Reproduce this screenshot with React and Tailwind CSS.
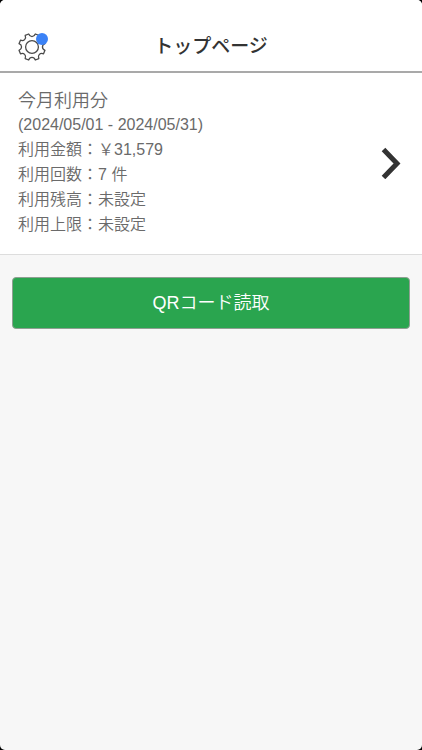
import React from "react";

const usage = {
  title: "今月利用分",
  period: "(2024/05/01 - 2024/05/31)",
  rows: [
    { label: "利用金額", value: "￥31,579" },
    { label: "利用回数", value: "7 件" },
    { label: "利用残高", value: "未設定" },
    { label: "利用上限", value: "未設定" },
  ],
};

// Outline of the gear: n flat teeth with round notches between them
function gearPath(n, inner, outer) {
  const step = (Math.PI * 2) / n;
  const at = (r, a) => `${(16 + r * Math.cos(a)).toFixed(2)} ${(16 + r * Math.sin(a)).toFixed(2)}`;
  let d = "";
  for (let i = 0; i < n; i++) {
    const a = i * step - Math.PI / 2 + step / 2;
    d += `${i === 0 ? "M" : "L"}${at(outer, a - step * 0.18)}`;
    d += `L${at(outer, a + step * 0.18)}`;
    d += `C${at(inner, a + step * 0.24)} ${at(inner, a + step * 0.76)} ${at(outer, a + step * 0.82)}`;
  }
  return d + "Z";
}

function GearIcon() {
  return (
    <svg viewBox="0 0 32 32" className="w-8 h-8" fill="none" stroke="#4a4a4a" strokeWidth="1.3" strokeLinejoin="round" aria-hidden="true">
      <path d={gearPath(8, 9.8, 13.4)} />
      <circle cx="16" cy="16" r="6.4" />
    </svg>
  );
}

function Header() {
  return (
    <header className="grid grid-cols-[1fr_auto_1fr] items-center bg-white border-b-2 border-[#a9a9a9] px-4 pt-[31px] pb-2">
      <button type="button" aria-label="設定" className="relative w-8 h-8">
        <GearIcon />
        <span className="absolute top-[2px] right-0 w-3 h-3 rounded-full bg-[#3b82f6]" />
      </button>
      <h1 className="text-[19px] leading-6 font-medium text-[#333]">トップページ</h1>
    </header>
  );
}

function UsageCard() {
  return (
    <a href="#usage" className="flex items-center justify-between bg-white border-b border-[#ddd] pl-[18px] pr-[21px] pt-4 pb-[17px] text-[#6a6a6a]">
      <div>
        <h2 className="text-lg leading-6 font-[350]">{usage.title}</h2>
        <p className="text-base leading-6">{usage.period}</p>
        {usage.rows.map((row) => (
          <p key={row.label} className="text-base leading-[25px] font-[350]">
            {row.label}：{row.value}
          </p>
        ))}
      </div>
      <svg viewBox="0 0 20 32" className="w-5 h-8" fill="none" stroke="#333" strokeWidth="5" aria-hidden="true">
        <path d="M2.5 2.5 L16 16.5 L2.5 30.5" />
      </svg>
    </a>
  );
}

export default function App() {
  return (
    <div className="bg-black">
      <div className="min-h-screen overflow-hidden rounded-[5px] bg-[#f7f7f7] font-['Liberation_Sans','Noto_Sans_CJK_JP',sans-serif]">
        <Header />
        <main>
          <UsageCard />
          <div className="px-3 pt-[22px]">
            <button
              type="button"
              className="w-full h-[52px] rounded-[4px] border border-[#8f9f92] bg-[#2aa54f] text-lg font-[350] text-white"
            >
              QRコード読取
            </button>
          </div>
        </main>
      </div>
    </div>
  );
}
